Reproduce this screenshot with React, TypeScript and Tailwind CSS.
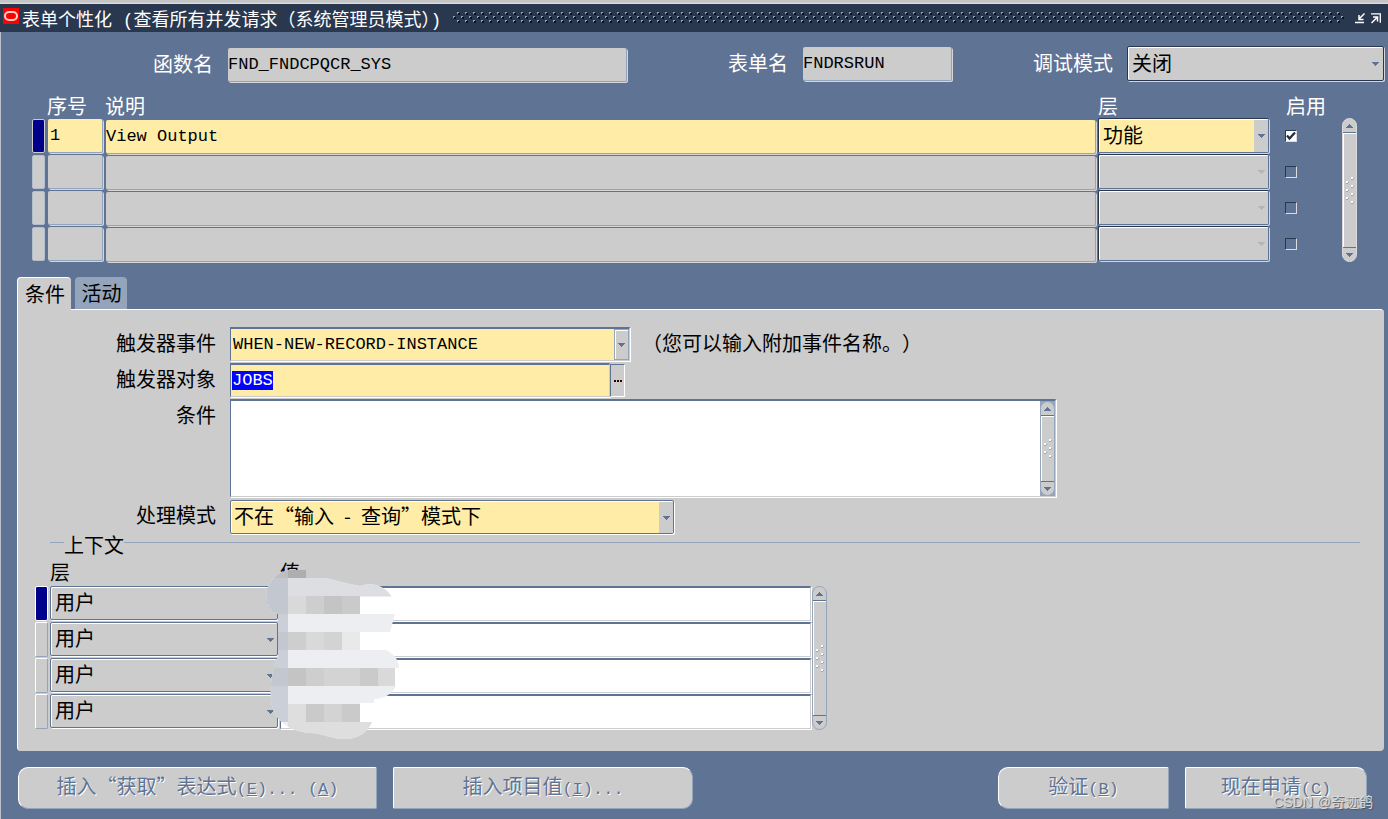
import { useEffect, useRef, useState } from "react";
import type { ReactNode } from "react";

const LATIN = "font-['Liberation_Mono','Noto_Sans_CJK_SC',monospace] text-[17px]";

function Latin({ children }: { children: ReactNode }) {
  return <span className={LATIN}>{children}</span>;
}

function Triangle({ up = false, className = "" }: { up?: boolean; className?: string }) {
  return (
    <svg viewBox="0 0 7 4" width="7" height="4" className={className} shapeRendering="crispEdges" aria-hidden="true">
      {up ? (
        <path fill="currentColor" d="M3 0h1v1h1v1h1v1h1v1H0V3h1V2h1V1h1z" />
      ) : (
        <path fill="currentColor" d="M0 0h7v1H6v1H5v1H4v1H3V3H2V2H1V1H0z" />
      )}
    </svg>
  );
}

function ScrollBar({ label, dots = 7, tone = "light" }: { label: string; dots?: number; tone?: "light" | "blue" }) {
  const edge = tone === "light" ? "border-[#dcdcdc]" : "border-[#94a4bb]";
  return (
    <div
      role="group"
      aria-label={label}
      className={`flex w-[15px] shrink-0 flex-col items-stretch overflow-hidden rounded-full border bg-[#cccccc] text-[#5f7394] ${edge}`}
    >
      <button type="button" aria-label="向上滚动" className="flex h-[14px] shrink-0 items-center justify-center border-b border-[#5f7394]">
        <Triangle up />
      </button>
      <div className="flex flex-1 items-center justify-center border-t border-l border-white">
        <svg width="10" height="28" viewBox="0 0 10 28" shapeRendering="crispEdges" aria-hidden="true">
          {Array.from({ length: dots }, (_, i) => {
            const x = i % 2 === 0 ? 6 : 1;
            const y = i * 4 + (7 - dots) * 2;
            return (
              <g key={i}>
                <path fill="#94a4bb" d={`M${x + 1} ${y + 1}h2v1h-1v1h-2v-1h1z`} />
                <rect x={x} y={y} width="2" height="2" fill="#ffffff" />
              </g>
            );
          })}
        </svg>
      </div>
      <button type="button" aria-label="向下滚动" className="flex h-[14px] shrink-0 items-center justify-center border-t border-[#5f7394]">
        <Triangle />
      </button>
    </div>
  );
}

const greyField =
  "block h-[34px] rounded-[2px] border-r border-b border-[#94a4bb] bg-[#cccccc] text-black shadow-[1px_1px_0_#d6d6d6] outline-none";

const personalizations = [
  { seq: "1", text: "View Output", level: "功能", enabled: true },
  { seq: "", text: "", level: "", enabled: false },
  { seq: "", text: "", level: "", enabled: false },
  { seq: "", text: "", level: "", enabled: false },
];

function TitleBar() {
  return (
    <header className="border-t-2 border-[#c4c4c4] bg-[#cccccc] pt-px">
      <div className="flex h-[29px] items-center border-t border-[#dcdcdc] bg-[#29384f] pl-[3px] pr-[7px]">
        <svg width="16" height="16" viewBox="0 0 16 16" className="mb-[4px] shrink-0" aria-hidden="true">
          <rect width="16" height="16" fill="#ff0000" />
          <rect x="2" y="4" width="12" height="8" rx="4" fill="none" stroke="#ffd0d0" strokeWidth="2" />
        </svg>
        <h1 className="ml-[3px] whitespace-pre pt-[5px] font-['Liberation_Mono','Noto_Sans_CJK_SC',monospace] text-[18px] leading-[24px] text-white [text-spacing-trim:normal]">
          表单个性化 (查看所有并发请求（系统管理员模式）)
        </h1>
        <svg height="12" className="ml-[12px] min-w-0 flex-1" shapeRendering="crispEdges" aria-hidden="true">
          <defs>
            <pattern id="grip" width="8" height="8" patternUnits="userSpaceOnUse">
              <path fill="#0b111b" d="M5 1h2v2h-2zM1 5h2v2h-2z" />
              <path fill="#8fa2bd" d="M4 0h2v1h-1v1h-1zM0 4h2v1h-1v1h-1z" />
            </pattern>
          </defs>
          <rect width="100%" height="12" fill="url(#grip)" />
        </svg>
        <div className="ml-[10px] flex gap-[6px]">
          <button type="button" aria-label="最小化">
            <svg width="10" height="11" viewBox="0 0 10 11" aria-hidden="true">
              <path d="M9.5.5 4 6M4 2v4.5h4.5" fill="none" stroke="#fff" strokeWidth="1.5" />
              <path d="M0 9.5h9" stroke="#fff" strokeWidth="1.5" />
            </svg>
          </button>
          <button type="button" aria-label="还原">
            <svg width="10" height="11" viewBox="0 0 10 11" aria-hidden="true">
              <path d="M.5 10 6 4.500M2 4h4.500v4.500" fill="none" stroke="#fff" strokeWidth="1.500" />
              <path d="M0 .8h9.300v9" fill="none" stroke="#fff" strokeWidth="1.300" />
            </svg>
          </button>
        </div>
      </div>
    </header>
  );
}

function HeaderFields() {
  return (
    <div className="flex items-start pt-[15px] text-white">
      <label htmlFor="func" className="w-[212px] shrink-0 text-right leading-[34px]">函数名</label>
      <input id="func" readOnly defaultValue="FND_FNDCPQCR_SYS" className={`ml-[15px] mt-px w-[399px] ${greyField} ${LATIN}`} />
      <label htmlFor="form" className="ml-auto leading-[32px]">表单名</label>
      <input id="form" readOnly defaultValue="FNDRSRUN" className={`ml-[15px] w-[149px] ${greyField} ${LATIN}`} />
      <label htmlFor="debug" className="ml-[81px] leading-[32px]">调试模式</label>
      <div className="relative -mt-px ml-[14px] mr-[4px] w-[257px]">
        <select
          id="debug"
          className="block h-[35px] w-full appearance-none rounded-[2px] border border-[#29384f] bg-[#cccccc] pb-[2px] pl-[4px] text-black shadow-[1px_1px_0_#d6d6d6,inset_1px_1px_0_#ffffff] outline-none"
        >
          <option>关闭</option>
          <option>打开</option>
        </select>
        <Triangle className="pointer-events-none absolute top-[16px] right-[5px] text-[#5f7394]" />
      </div>
    </div>
  );
}

function RuleTable() {
  return (
    <div className="flex pl-[31px] pr-[31px] pt-[12px]">
      <table className="min-w-0 flex-1 table-fixed border-collapse">
        <colgroup>
          <col className="w-[15px]" />
          <col className="w-[58px]" />
          <col />
          <col className="w-[172px]" />
          <col className="w-[56px]" />
        </colgroup>
        <thead>
          <tr className="h-[24px] text-left leading-[24px] text-white">
            <th className="p-0" aria-label="当前记录" />
            <th className="p-0 font-normal">序号</th>
            <th className="p-0 font-normal">说明</th>
            <th className="p-0 font-normal">层</th>
            <th className="whitespace-nowrap p-0 pl-[16px] font-normal">启用</th>
          </tr>
        </thead>
        <tbody>
          {personalizations.map((row, i) => {
            const fill = row.enabled ? "bg-[#ffeda7]" : "bg-[#cccccc]";
            return (
              <tr key={i} className="h-[36px]">
                <td className="p-0 pr-px align-top">
                  <div className={`mr-px mt-px h-[34px] rounded-[2px] border ${row.enabled ? "border-[#cccccc] bg-[#00008b]" : "border-[#b4bdcb] bg-[#cccccc]"}`} />
                </td>
                <td className="p-0 pl-px pr-[2px] align-top">
                  <input aria-label={`序号 ${i + 1}`} defaultValue={row.seq} className={`mt-px w-[55px] pl-[2px] ${greyField} ${fill} ${LATIN}`} />
                </td>
                <td className="p-0 pl-px pr-[2px] align-top">
                  <input aria-label={`说明 ${i + 1}`} defaultValue={row.text} className={`mt-[2px] w-full ${greyField} ${fill} ${LATIN}`} />
                </td>
                <td className="p-0 pr-px align-top">
                  <div className="relative">
                    <select
                      aria-label={`层 ${i + 1}`}
                      disabled={!row.enabled}
                      defaultValue={row.level}
                      className={`block h-[35px] w-full appearance-none rounded-[2px] border border-[#29384f] border-r-[#5f7394] border-b-[#5f7394] pb-[2px] pl-[4px] text-black opacity-100 shadow-[1px_1px_0_#d6d6d6,inset_1px_1px_0_#ffffff] outline-none ${fill}`}
                    >
                      <option>{row.level}</option>
                    </select>
                    <span className="pointer-events-none absolute top-[2px] right-px flex h-[32px] w-[14px] items-center justify-center bg-[#cccccc]">
                      <Triangle className={row.enabled ? "text-[#5f7394]" : "text-[#b4b4b4]"} />
                    </span>
                  </div>
                </td>
                <td className="p-0 pl-[15px] align-top">
                  <label className="mt-[12px] block w-[12px]">
                    <input
                      type="checkbox"
                      aria-label={`启用 ${i + 1}`}
                      defaultChecked={row.enabled}
                      disabled={!row.enabled}
                      className="sr-only"
                    />
                    <span
                      className={`flex h-[12px] w-[12px] items-center justify-center border border-[#29384f] border-r-[#dcdcdc] border-b-[#dcdcdc] ${row.enabled ? "bg-white" : ""}`}
                    >
                      {row.enabled && (
                        <svg width="10" height="10" viewBox="0 0 10 10" aria-hidden="true">
                          <path d="M1 4.500 3.500 7.500 9 1.500" fill="none" stroke="#1f2b3f" strokeWidth="2.200" />
                        </svg>
                      )}
                    </span>
                  </label>
                </td>
              </tr>
            );
          })}
        </tbody>
      </table>
      <div className="ml-[16px] mt-[24px] flex">
        <ScrollBar label="记录滚动条" />
      </div>
    </div>
  );
}

const sunken =
  "border border-t-2 border-t-[#5f7394] border-l-[#5f7394] border-r-[#cccccc] border-b-[#cccccc] shadow-[1px_1px_0_#ffffff]";

function ConditionForm() {
  const target = useRef<HTMLInputElement>(null);
  useEffect(() => {
    target.current?.focus();
    target.current?.select();
  }, []);
  const labelClass = "w-[198px] shrink-0 text-right leading-[32px]";
  return (
    <div className="flex flex-col gap-[2px]">
      <div className="flex">
        <label htmlFor="event" className={labelClass}>触发器事件</label>
        <div className={`ml-[14px] flex h-[34px] w-[400px] bg-[#ffeda7] ${sunken}`}>
          <input id="event" defaultValue="WHEN-NEW-RECORD-INSTANCE" className={`min-w-0 flex-1 bg-transparent pl-[2px] outline-none ${LATIN}`} />
          <button type="button" aria-label="打开事件列表" className="flex w-[15px] items-center justify-center border border-[#94a4bb] bg-[#cccccc] shadow-[inset_1px_1px_0_#ffffff]">
            <Triangle className="text-[#5f7394]" />
          </button>
        </div>
        <span className="ml-[12px] leading-[32px]">（您可以输入附加事件名称。）</span>
      </div>
      <div className="flex">
        <label htmlFor="object" className={labelClass}>触发器对象</label>
        <div className={`ml-[14px] flex h-[34px] w-[380px] items-start bg-[#ffeda7] ${sunken}`}>
          <input
            ref={target}
            id="object"
            defaultValue="JOBS"
            className={`h-[30px] min-w-0 flex-1 bg-transparent pl-px outline-none selection:bg-[#0000fffe] selection:text-white ${LATIN}`}
          />
        </div>
        <button type="button" aria-label="值列表" className="mt-px flex h-[33px] w-[15px] items-center justify-center border border-[#5f7394] border-r-white border-b-white bg-[#cccccc]">
          <svg width="8" height="2" viewBox="0 0 8 2" shapeRendering="crispEdges" aria-hidden="true">
            <path fill="#300" d="M0 0h2v2H0zM3 0h2v2H3zM6 0h2v2H6z" />
          </svg>
        </button>
      </div>
      <div className="flex">
        <label htmlFor="condition" className={labelClass}>条件</label>
        <div className={`ml-[14px] flex h-[98px] w-[826px] bg-white ${sunken}`}>
          <textarea id="condition" className={`min-w-0 flex-1 resize-none bg-transparent outline-none ${LATIN}`} />
          <div className="flex bg-[#94a4bb]">
            <ScrollBar label="条件滚动条" dots={5} tone="blue" />
          </div>
        </div>
      </div>
      <div className="flex">
        <label htmlFor="mode" className={labelClass}>处理模式</label>
        <div className="relative ml-[14px] mt-px w-[444px]">
          <select
            id="mode"
            className="block h-[34px] w-full appearance-none rounded-[2px] border border-[#5f7394] bg-[#ffeda7] pb-[2px] pl-[3px] text-black shadow-[1px_1px_0_#ffffff,inset_1px_1px_0_#ffffff] outline-none"
          >
            <option>不在“输入&ensp;-&ensp;查询”模式下</option>
          </select>
          <span className="pointer-events-none absolute top-[2px] right-px flex h-[31px] w-[14px] items-center justify-center bg-[#cccccc]">
            <Triangle className="text-[#5f7394]" />
          </span>
        </div>
      </div>
    </div>
  );
}

function Smudge() {
  return (
    <svg width="134" height="172" viewBox="0 0 134 172" className="pointer-events-none absolute top-[12px] left-[231px]" aria-hidden="true">
      <defs>
        <clipPath id="smear">
          <path d="M0 26C2 12 14 3 24 2h16v8h14c12 0 22 5 40 8 15-5 26 2 32 11H94v17h35l-5 18H94v18h26c8 4 13 10 13 18h-4v18h1c-4 9-14 13-22 13v4H94v19h12c-4 10-14 17-26 17-18 0-22-6-37-6-20-2-35-12-38-32C4 116 6 100 12 90V46C5 46 2 40 0 26z" />
        </clipPath>
      </defs>
      <g clipPath="url(#smear)">
        <path fill="#eceef2" d="M0 0h134v172H0z" />
        <path fill="#dcdee2" d="M0 10h134v18H0z" />
        <path fill="#c3c8d0" d="M0 0h22v46H0zM0 64h22v18H0zM0 100h22v18H0z" />
        <path fill="#cbd0d8" d="M0 46h22v18H0zM0 82h22v18H0zM0 118h22v36H0z" />
        <path fill="#bebec0" d="M0 0h22v10H0z" />
        <path fill="#aeaeae" d="M22 0h18v10H22z" />
        <path fill="#d9d9da" d="M22 28h18v18H22zM40 64h18v18H40zM112 100h22v18h-22z" />
        <path fill="#cecece" d="M40 28h18v18H40zM22 64h18v18H22zM40 100h18v18H40z" />
        <path fill="#c4c4c4" d="M58 28h18v18H58zM22 100h18v18H22z" />
        <path fill="#cacaca" d="M76 28h18v18H76zM94 100h18v18H94zM40 136h18v18H40zM76 136h18v18H76z" />
        <path fill="#d3d3d3" d="M58 64h18v18H58zM58 100h36v18H58zM58 136h18v18H58z" />
        <path fill="#e9e9e9" d="M76 64h18v18H76z" />
        <path fill="#dedede" d="M22 136h18v18H22zM22 154h112v18H22z" />
      </g>
    </svg>
  );
}

function ContextTable() {
  return (
    <fieldset className="-mt-[5px] ml-[32px] mr-[24px] min-w-0 border-t border-[#94a4bb]">
      <legend className="ml-[14px] pt-[5px] leading-[22px] text-black">上下文</legend>
      <div className="relative -ml-[15px] flex pt-[4px]">
        <table className="w-[776px] table-fixed border-collapse">
          <colgroup>
            <col className="w-[15px]" />
            <col className="w-[230px]" />
            <col />
          </colgroup>
          <thead>
            <tr className="h-[26px] text-left align-top leading-[24px]">
              <th className="p-0" aria-label="当前记录" />
              <th className="p-0 font-normal">层</th>
              <th className="p-0 font-normal">值</th>
            </tr>
          </thead>
          <tbody>
            {[0, 1, 2, 3].map((i) => (
              <tr key={i} className="h-[36px]">
                <td className="p-0 pr-px align-top">
                  <div className={`h-[35px] w-[13px] rounded-[2px] border border-white ${i === 0 ? "bg-[#00008b]" : "border-r-[#94a4bb] border-b-[#94a4bb] bg-[#cccccc]"}`} />
                </td>
                <td className="p-0 pr-[2px] align-top">
                  <div className="relative">
                    <select
                      aria-label={`层 ${i + 1}`}
                      className="block h-[34px] w-full appearance-none rounded-[2px] border border-[#5f7394] bg-[#cccccc] pb-[4px] pl-[4px] text-black shadow-[1px_1px_0_#ffffff,inset_1px_1px_0_#ffffff] outline-none"
                    >
                      <option>用户</option>
                    </select>
                    <Triangle className="pointer-events-none absolute top-[16px] right-[4px] text-[#5f7394]" />
                  </div>
                </td>
                <td className="p-0 align-top">
                  <input aria-label={`值 ${i + 1}`} className={`block h-[35px] w-full bg-white outline-none ${sunken} ${LATIN}`} />
                </td>
              </tr>
            ))}
          </tbody>
        </table>
        <div className="ml-px mt-[26px] flex">
          <ScrollBar label="上下文滚动条" tone="blue" />
        </div>
        <Smudge />
      </div>
    </fieldset>
  );
}

function ActionButton({ className, children }: { className: string; children: ReactNode }) {
  return (
    <button
      type="button"
      className={`h-[42px] shrink-0 whitespace-pre border border-white border-r-[#94a4bb] border-b-[#94a4bb] bg-[#cccccc] pb-[2px] text-[#5f7394] [text-shadow:1px_1px_0_#ffffff] ${className}`}
    >
      {children}
    </button>
  );
}

export default function App() {
  const [tab, setTab] = useState(0);
  const tabs = ["条件", "活动"];
  return (
    <div
      lang="zh-CN"
      className="flex min-h-screen flex-col bg-[#5f7394] font-['Noto_Sans_CJK_SC',sans-serif] text-[20px] text-black [text-spacing-trim:space-all]"
    >
      <TitleBar />
      <main className="flex flex-1 flex-col border-l border-[#b9c0cc]">
        <HeaderFields />
        <RuleTable />
        <div role="tablist" className="ml-[16px] mt-[15px] flex gap-[4px]">
          {tabs.map((name, i) => (
            <button
              key={name}
              type="button"
              role="tab"
              aria-selected={tab === i}
              onClick={() => setTab(i)}
              className={`rounded-t-[4px] pl-px leading-[32px] ${
                tab === i
                  ? "relative -mb-px h-[33px] w-[54px] border-t border-l border-white bg-[#cccccc]"
                  : "h-[32px] w-[52px] bg-[#94a4bb]"
              }`}
            >
              {name}
            </button>
          ))}
        </div>
        <section className="ml-[16px] mr-[4px] rounded-[4px] rounded-tl-none border-t border-l border-white bg-[#cccccc] pt-[17px] pb-[21px]">
          <ConditionForm />
          <ContextTable />
        </section>
        <footer className="relative flex pl-[17px] pr-[21px] pt-[16px] pb-[10px]">
          <ActionButton className="w-[359px] rounded-l-[10px] rounded-r-[2px]">
            插入“获取”表达式<Latin>(<u>E</u>)... (<u>A</u>)</Latin>
          </ActionButton>
          <ActionButton className="ml-[16px] w-[300px] rounded-l-[2px] rounded-r-[10px]">
            插入项目值<Latin>(<u>I</u>)...</Latin>
          </ActionButton>
          <ActionButton className="ml-auto w-[171px] rounded-l-[10px] rounded-r-[2px]">
            验证<Latin>(<u>B</u>)</Latin>
          </ActionButton>
          <ActionButton className="ml-[16px] w-[182px] rounded-l-[2px] rounded-r-[10px]">
            现在申请<Latin>(<u>C</u>)</Latin>
          </ActionButton>
          <span className="pointer-events-none absolute right-[15px] bottom-[7px] font-['Liberation_Sans','Noto_Sans_CJK_SC',sans-serif] text-[14px] leading-[20px] text-[#d9dbde] [text-shadow:1px_1px_1px_#555555]">
            CSDN @奇迹鸽
          </span>
        </footer>
      </main>
    </div>
  );
}
